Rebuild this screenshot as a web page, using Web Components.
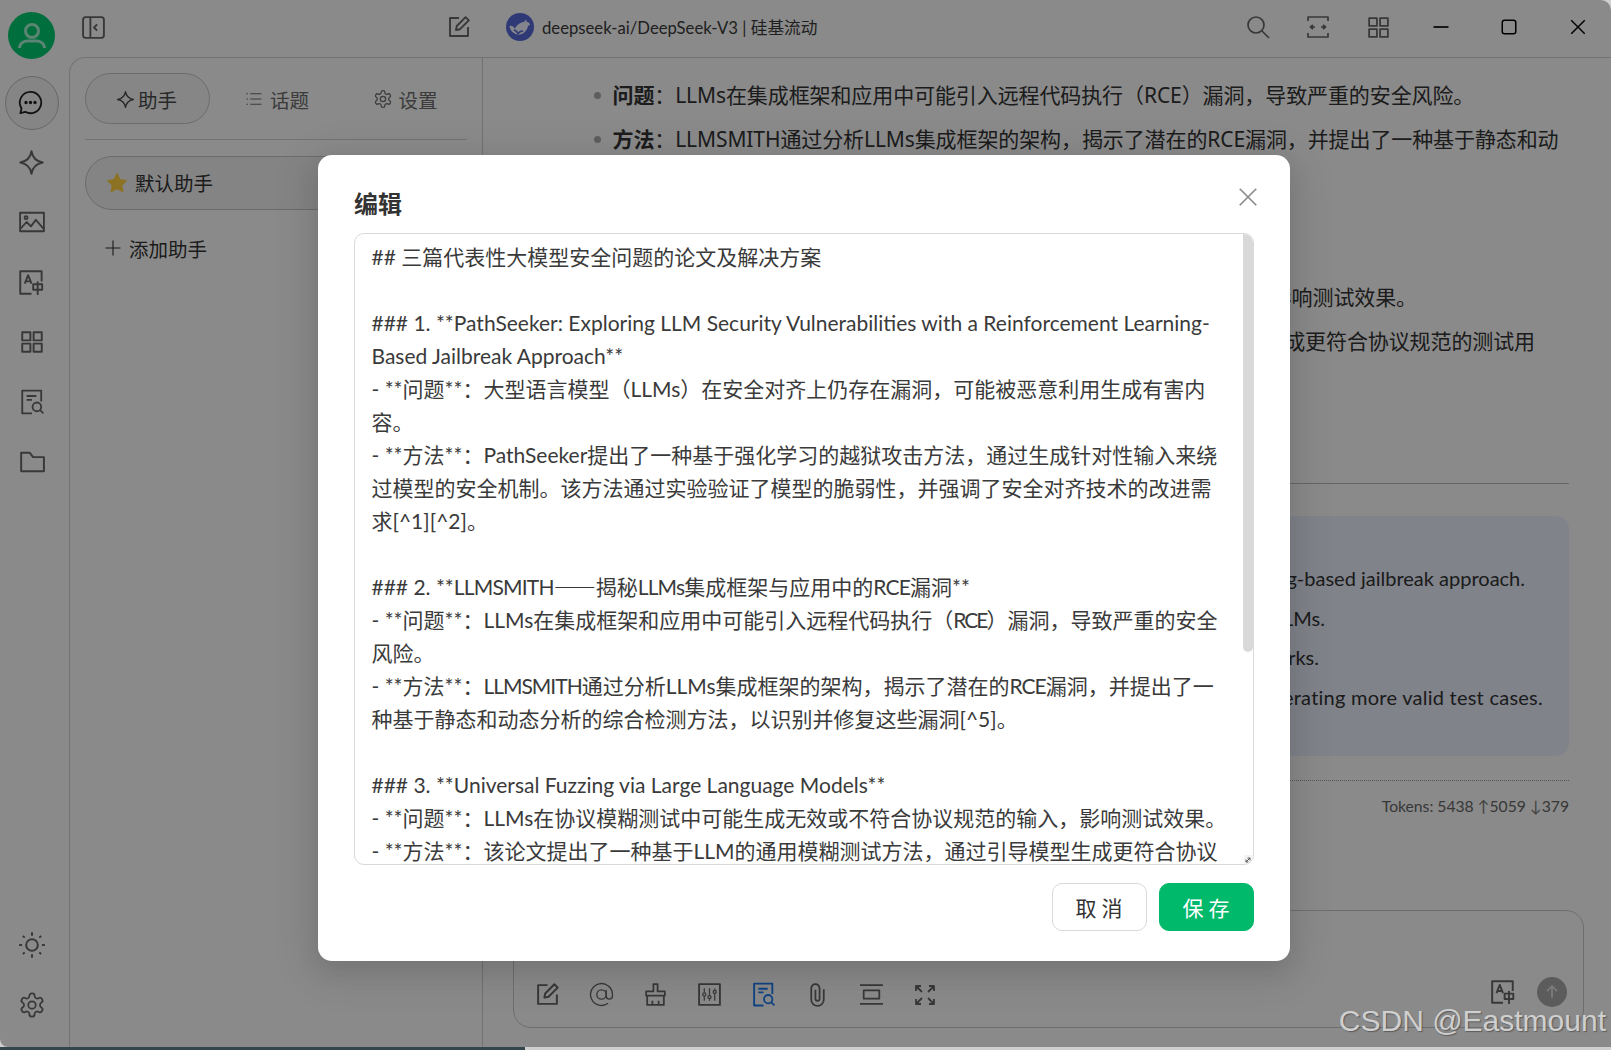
<!DOCTYPE html>
<html lang="zh"><head><meta charset="utf-8"><title>编辑</title>
<style>
html,body{margin:0;padding:0;width:1611px;height:1050px;overflow:hidden;background:#cfcfcf}
body{font-family:"Noto Sans","Noto Sans CJK SC",sans-serif;color:#333}
edit-field div{height:33px}
edit-field .n1{letter-spacing:-1px}
edit-field .n2{letter-spacing:-2px}
edit-field .n3{letter-spacing:-.8px}
edit-field .cjk{font-family:"Noto Sans CJK SC",sans-serif}
</style></head><body>
<app-shell>
  <side-rail></side-rail>
  <div slot="main" style="display:flex;flex-direction:column;min-width:0;flex:1">
    <title-bar></title-bar>
    <div style="display:flex;flex:1;min-height:0">
      <assistant-panel></assistant-panel>
      <chat-view></chat-view>
    </div>
  </div>
  <edit-modal slot="overlay" heading="编辑"><edit-field>
<div>## 三篇代表性大模型安全问题的论文及解决方案</div>
<div></div>
<div>### 1. **PathSeeker: Exploring LLM Security Vulnerabilities with a Reinforcement Learning-</div>
<div>Based Jailbreak Approach**</div>
<div>- **问题**：大型语言模型（LLMs）在安全对齐上仍存在漏洞，可能被恶意利用生成有害内</div>
<div>容。</div>
<div>- **方法**：PathSeeker提出了一种基于强化学习的越狱攻击方法，通过生成针对性输入来绕</div>
<div>过模型的安全机制。该方法通过实验验证了模型的脆弱性，并强调了安全对齐技术的改进需</div>
<div>求[^1][^2]。</div>
<div></div>
<div>### 2. **<span class="n3">LLMSMITH</span><span class="cjk">——</span>揭秘<span class="n3">LLMs</span>集成框架与应用中的<span class="n3">RCE</span>漏洞**</div>
<div>- **问题**：LLMs在集成框架和应用中可能引入远程代码执行（<span class="n2">RCE</span>）漏洞，导致严重的安全</div>
<div>风险。</div>
<div>- **方法**：<span class="n1">LLMSMITH</span>通过分析LLMs集成框架的架构，揭示了潜在的<span class="n1">RCE</span>漏洞，并提出了一</div>
<div>种基于静态和动态分析的综合检测方法，以识别并修复这些漏洞[^5]。</div>
<div></div>
<div>### 3. **Universal Fuzzing via Large Language Models**</div>
<div>- **问题**：LLMs在协议模糊测试中可能生成无效或不符合协议规范的输入，影响测试效果。</div>
<div>- **方法**：该论文提出了一种基于LLM的通用模糊测试方法，通过引导模型生成更符合协议</div>
</edit-field></edit-modal>
  <water-mark slot="overlay2">CSDN @Eastmount</water-mark>
</app-shell>
<task-strip></task-strip>
<script>
const ICONS={
toggle:'<rect x="2" y="2" width="20" height="20" rx="2.5"/><path d="M9 2v20M15.5 9l-3 3 3 3"/>',
edit:'<path d="M12 3H3v18h18v-9"/><path d="M9 15l.8-4L18.6 2.2l3.2 3.2L13 14.2z"/>',
chat:'<path d="M12 2.5a9.5 9.5 0 1 1-4.6 17.8L3 21.5l1-4.4A9.5 9.5 0 0 1 12 2.5z"/><circle cx="8" cy="12" r=".7" fill="currentColor"/><circle cx="12" cy="12" r=".7" fill="currentColor"/><circle cx="16" cy="12" r=".7" fill="currentColor"/>',
spark:'<path d="M12 2c1 6 4 9 10 10-6 1-9 4-10 10-1-6-4-9-10-10 6-1 9-4 10-10z"/>',
image:'<rect x="1" y="3.5" width="22" height="17"/><circle cx="6.500" cy="8" r="1.400"/><path d="M1 18.500l6-6.500 4 4 4.500-6 7.500 8.500"/>',
trans:'<path d="M21 11V2H2v20h10"/><path d="M6 13l3-7.5L12 13M7 11h4"/><rect x="13.500" y="13.500" width="8" height="5"/><path d="M17.500 11v12"/>',
grid:'<rect x="3" y="3" width="7.500" height="7.500"/><rect x="13.500" y="3" width="7.500" height="7.500"/><rect x="3" y="13.500" width="7.500" height="7.500"/><rect x="13.500" y="13.500" width="7.500" height="7.500"/>',
doc:'<path d="M12 22.500H3V1.500h17.500v10"/><path d="M7 6.500h9M7 10h5"/><circle cx="16.500" cy="16.500" r="4"/><path d="M19.500 19.500l3 3"/>',
folder:'<path d="M2 3.500h8l3 4h10v13H2z"/>',
sun:'<circle cx="12" cy="12" r="5"/><path d="M12 1v3M12 20v3M1 12h2.500M20.500 12H23M4.200 4.200l1.500 1.500M18.300 18.300l1.500 1.500M4.200 19.800l1.500-1.500M18.300 5.700l1.500-1.500"/>',
gear:'<path d="M12.220 2h-.44a2 2 0 0 0-2 2v.18a2 2 0 0 1-1 1.730l-.43.25a2 2 0 0 1-2 0l-.15-.08a2 2 0 0 0-2.730.73l-.22.38a2 2 0 0 0 .73 2.730l.15.1a2 2 0 0 1 1 1.720v.51a2 2 0 0 1-1 1.740l-.15.09a2 2 0 0 0-.73 2.730l.22.38a2 2 0 0 0 2.730.73l.15-.08a2 2 0 0 1 2 0l.43.25a2 2 0 0 1 1 1.730V20a2 2 0 0 0 2 2h.44a2 2 0 0 0 2-2v-.18a2 2 0 0 1 1-1.730l.43-.25a2 2 0 0 1 2 0l.15.08a2 2 0 0 0 2.730-.73l.22-.39a2 2 0 0 0-.73-2.730l-.15-.08a2 2 0 0 1-1-1.740v-.5a2 2 0 0 1 1-1.740l.15-.09a2 2 0 0 0 .73-2.730l-.22-.38a2 2 0 0 0-2.730-.73l-.15.08a2 2 0 0 1-2 0l-.43-.25a2 2 0 0 1-1-1.730V4a2 2 0 0 0-2-2z"/><circle cx="12" cy="12" r="3.200"/>',
list:'<path d="M7 5h15M7 12h15M7 19h15M2 5h2M2 12h2M2 19h2"/>',
plus:'<path d="M12 2v20M2 12h20"/>',
search:'<circle cx="10" cy="10" r="8"/><path d="M16 16l7 7"/>',
expand:'<path d="M2 6V2h20v4M2 18v4h20v-4"/><path d="M4 12h5M7 10l-2.500 2L7 14M20 12h-5M17 10l2.500 2-2.500 2"/>',
min:'<path d="M2 12h20"/>',
max:'<rect x="3" y="3" width="18" height="18" rx="3"/>',
close:'<path d="M3 3l18 18M21 3L3 21"/>',
at:'<circle cx="12" cy="12" r="4.500"/><path d="M16.500 7.500v6a3 3 0 0 0 6 0V12a10.500 10.500 0 1 0-4.200 8.400"/>',
brush:'<path d="M10 2h4v7h7v4H3V9h7z"/><path d="M4 13v9h16v-9M9 22v-4M15 22v-4"/>',
sliders:'<rect x="2" y="2" width="20" height="20"/><path d="M7 6v4M7 14v4M12 6v6.500M12 16.500V18M17 6v1.500M17 11.500V18" stroke-width="1.200"/><circle cx="7" cy="12" r="1.500" stroke-width="1.200"/><circle cx="12" cy="14.500" r="1.500" stroke-width="1.200"/><circle cx="17" cy="9.500" r="1.500" stroke-width="1.200"/>',
clip:'<path d="M10 7.500V16a2 2 0 0 0 4 0V6a4 4 0 0 0-8 0v11a6 6 0 0 0 12 0V7"/>',
fold:'<path d="M1 3h22M1 21h22"/><rect x="4.500" y="8" width="15" height="8"/>',
arrows:'<path d="M3 3l6 6M3 8V3h5M21 3l-6 6M21 8V3h-5M3 21l6-6M3 16v5h5M21 21l-6-6M21 16v5h-5"/>',
up:'<path d="M12 19V5M6 11l6-6 6 6"/>'
};
class UiIcon extends HTMLElement{
  connectedCallback(){
    const s=this.getAttribute('size')||24, w=this.getAttribute('stroke')||2;
    this.attachShadow({mode:'open'}).innerHTML=`<style>:host{display:inline-flex;flex:none;line-height:0;color:inherit}svg{display:block}</style><svg width="${s}" height="${s}" viewBox="0 0 24 24" fill="none" stroke="currentColor" stroke-width="${w}" stroke-linejoin="round">${ICONS[this.getAttribute('name')]}</svg>`;
  }
}
customElements.define('ui-icon',UiIcon);

class AppShell extends HTMLElement{constructor(){super();this.attachShadow({mode:'open'}).innerHTML=`<style>
:host{display:flex;position:relative;width:1611px;height:1047px;overflow:hidden;background:#fbfbfb;border-radius:0 10px 0 8px}
.dim{position:absolute;inset:0;background:rgba(0,0,0,.45)}
</style><slot></slot><slot name="main"></slot><div class="dim"></div><slot name="overlay"></slot><slot name="overlay2"></slot>`}}
customElements.define('app-shell',AppShell);

class SideRail extends HTMLElement{constructor(){super();this.attachShadow({mode:'open'}).innerHTML=`<style>
:host{display:flex;flex-direction:column;align-items:center;width:69px;flex:none;padding:12px 0 12px;box-sizing:border-box;color:#666}
.av{width:47px;height:47px;border-radius:50%;background:#00c870;margin:0 0 17px -6px;display:flex;align-items:center;justify-content:center;color:#a6f0cf}
.i{width:60px;height:60px;display:flex;align-items:center;justify-content:center;margin-left:-6px;position:relative}
.i.on::before{content:"";position:absolute;top:0;left:3px;width:52px;height:52px;border:1px solid #bdbdbd;border-radius:50%;background:#f2f2f2}
.i.on{height:56px;align-items:flex-start;color:#222}
.i.on ui-icon{position:relative;top:13px;left:-1px}
.sp{flex:1}
</style>
<div class="av"><svg width="30" height="30" viewBox="0 0 30 30" fill="none" stroke="currentColor" stroke-width="3"><circle cx="15" cy="10" r="6.500"/><path d="M2.500 27c0-5 5-7 7.500-7h10c2.500 0 7.500 2 7.500 7"/></svg></div>
<div class="i on"><ui-icon name="chat" size="27" stroke="1.600"></ui-icon></div>
<div class="i"><ui-icon name="spark" size="27" stroke="1.700"></ui-icon></div>
<div class="i"><ui-icon name="image" size="26" stroke="1.700"></ui-icon></div>
<div class="i"><ui-icon name="trans" size="27" stroke="1.700"></ui-icon></div>
<div class="i"><ui-icon name="grid" size="26" stroke="1.800"></ui-icon></div>
<div class="i"><ui-icon name="doc" size="26" stroke="1.700"></ui-icon></div>
<div class="i"><ui-icon name="folder" size="26" stroke="1.800"></ui-icon></div>
<div class="sp"></div>
<div class="i"><ui-icon name="sun" size="28" stroke="1.700"></ui-icon></div>
<div class="i"><ui-icon name="gear" size="28" stroke="1.500"></ui-icon></div>`}}
customElements.define('side-rail',SideRail);

class TitleBar extends HTMLElement{constructor(){super();this.attachShadow({mode:'open'}).innerHTML=`<style>
:host{display:flex;align-items:center;height:57px;flex:none;color:#666;position:relative}
.l{width:414px;box-sizing:border-box;display:flex;justify-content:space-between;padding:0 12px 0 12px;align-items:center;margin-top:-3px}
.t{display:flex;align-items:center;gap:8px;margin-left:23px;font:16.700px "Lato","Noto Sans CJK SC",sans-serif;color:#3a3a3a;white-space:nowrap;margin-top:-3px}
.r{margin-left:auto;display:flex;align-items:center;margin-right:24px;margin-top:-3px}
.logo{display:block}
.k{color:#000}
</style>
<div class="l"><ui-icon name="toggle" size="25" stroke="1.800"></ui-icon><ui-icon name="edit" size="24" stroke="1.900"></ui-icon></div>
<div class="t"><svg class="logo" width="28" height="28" viewBox="0 0 28 28"><circle cx="14" cy="14" r="14" fill="#5468d8"/><path d="M3.500 13c2-1 4 .5 5.500 2.500 2-4 6-6.500 9-6.500l2-2.500 1 2.500c2 0 3 1.500 3 3-2 0-2 2-3 4-2 4-6 6.500-10 5.500-4-1-7-4.500-7.500-8.500z" fill="#eef0ff"/><path d="M8 17c2 .5 3.500 2 4 4 1-2 3-3 5-3" fill="none" stroke="#5468d8" stroke-width="1.300"/></svg><span>deepseek-ai/DeepSeek-V3 | 硅基流动</span></div>
<div class="r"><ui-icon name="search" size="24" stroke="1.700" style="margin-right:2px"></ui-icon>
<ui-icon name="expand" size="24" stroke="1.700" style="margin-left:34px"></ui-icon>
<ui-icon name="grid" size="25" stroke="1.700" style="margin-left:36px"></ui-icon>
<ui-icon class="k" name="min" size="18" stroke="2.200" style="margin-left:41px"></ui-icon>
<ui-icon class="k" name="max" size="18" stroke="2" style="margin-left:50px"></ui-icon>
<ui-icon class="k" name="close" size="18" stroke="1.900" style="margin-left:51px"></ui-icon></div>`}}
customElements.define('title-bar',TitleBar);

class AssistantPanel extends HTMLElement{constructor(){super();this.attachShadow({mode:'open'}).innerHTML=`<style>
:host{display:block;width:414px;flex:none;box-sizing:border-box;border:1px solid #cfcfcf;border-width:1px 1px 0 1px;border-top-left-radius:16px;padding:15px 15px 0;font-size:19.500px}
.tabs{display:flex;height:51px;align-items:center;color:#6c6c6c;margin-bottom:15px}
.tab{display:flex;align-items:center;justify-content:center;gap:7px;height:51px;width:125px;box-sizing:border-box;border-radius:26px;flex:none;padding-top:1px}
.tab.a{border:1px solid #c4c4c4;background:#f5f5f5;color:#4a4a4a;gap:3px;padding-right:2px}
.tab.b{margin-left:2px;width:130px}.tab.c{width:125px;gap:5px;margin-left:1px}
hr{border:0;border-top:1px solid #cfcfcf;margin:0 0 16px}
.item{height:54px;box-sizing:border-box;border:1px solid #c4c4c4;border-radius:27px;background:#f0f0f0;display:flex;align-items:center;padding-left:21px;gap:8px;color:#333}
.item span{position:relative;top:-1px}
.add{display:flex;align-items:center;height:48px;margin-top:14px;padding-left:19px;gap:7px;color:#333}
</style>
<div class="tabs"><div class="tab a"><ui-icon name="spark" size="19" stroke="1.700"></ui-icon>助手</div>
<div class="tab b"><ui-icon name="list" size="18" stroke="1.500"></ui-icon>话题</div>
<div class="tab c"><ui-icon name="gear" size="20" stroke="1.500"></ui-icon>设置</div></div>
<hr>
<div class="item"><svg width="20" height="20" viewBox="0 0 20 20"><path d="M10 1l2.800 5.800 6.200.9-4.500 4.400 1.100 6.300L10 15.400 4.400 18.400l1.100-6.300L1 7.700l6.200-.9z" fill="#ffcf3f" stroke="#ffcf3f" stroke-width="1.500" stroke-linejoin="round"/></svg><span>默认助手</span></div>
<div class="add"><ui-icon name="plus" size="18" stroke="1.500"></ui-icon><span>添加助手</span></div>`}}
customElements.define('assistant-panel',AssistantPanel);

class ChatView extends HTMLElement{constructor(){super();this.attachShadow({mode:'open'}).innerHTML=`<style>
:host{display:flex;flex-direction:column;flex:1;min-width:0;border-top:1px solid #cfcfcf;font-size:21px;color:#333;position:relative}
.msg{padding:15px 42px 0 0;display:flex;flex-direction:column;align-items:flex-end;}
.row{height:44px;line-height:44px;white-space:nowrap;letter-spacing:-.1px}
.bul{align-self:flex-start;margin-left:110.500px;display:flex;gap:10px;align-items:center}
.bul::before{content:"";width:7px;height:7px;border-radius:50%;background:#aaa;margin-right:2px}
b{font-weight:700}
.gap{height:114px}
hr{border:0;border-top:1px solid #bbb;margin:120px 42px 0 0}
.box{margin:32px 42px 0 0;height:240px;box-sizing:border-box;background:#e9eefb;border-radius:14px;padding:43px 0 0;display:flex;flex-direction:column;align-items:flex-end;font:20px "Lato","Noto Sans",sans-serif}
.box div{height:39.500px;line-height:39.500px;white-space:nowrap}
.dots{border-top:1px dotted #999;margin:24px 42px 0 0}
.tok{margin:12px 42px 0 0;text-align:right;font:15.700px/26px "Lato","Noto Sans",sans-serif;color:#666}
.tok span{letter-spacing:-7.500px;margin-right:7.500px;color:#777}
.input{margin:auto 27px 19px 30px;height:118px;box-sizing:border-box;border:1px solid #c9c9c9;border-radius:18px;display:flex;align-items:flex-end;padding:0 16px 20px 21px;color:#666}
.tools{display:flex;gap:29px;align-items:center}
.tools .blue{color:#1f7af0}
.right{margin-left:auto;display:flex;align-items:center;gap:21px}
.send{width:30px;height:30px;border-radius:50%;background:#a8a8a8;color:#e0e0e0;display:flex;align-items:center;justify-content:center}
</style>
<div class="msg">
<div class="row bul"><span><b>问题</b>：LLMs在集成框架和应用中可能引入远程代码执行（RCE）漏洞，导致严重的安全风险。</span></div>
<div class="row bul"><span><b>方法</b>：LLMSMITH通过分析LLMs集成框架的架构，揭示了潜在的RCE漏洞，并提出了一种基于静态和动</span></div>
<div class="gap"></div>
<div class="row" style="margin-right:152px">影响测试效果。</div>
<div class="row" style="margin-right:34px">成更符合协议规范的测试用</div>
</div>
<hr>
<div class="box">
<div style="margin-right:44px">g-based jailbreak approach.</div>
<div style="margin-right:244px">LMs.</div>
<div style="margin-right:250px">rks.</div>
<div style="margin-right:26px;letter-spacing:.25px">nerating more valid test cases.</div>
</div>
<div class="dots"></div>
<div class="tok">Tokens: 5438 <span>↑</span>5059 <span>↓</span>379</div>
<div class="input"><div class="tools">
<ui-icon name="edit" size="25" stroke="1.900"></ui-icon><ui-icon name="at" size="25" stroke="1.300"></ui-icon><ui-icon name="brush" size="25" stroke="1.700"></ui-icon><ui-icon name="sliders" size="25" stroke="1.800"></ui-icon><ui-icon class="blue" name="doc" size="25" stroke="1.800"></ui-icon><ui-icon name="clip" size="25" stroke="1.700"></ui-icon><ui-icon name="fold" size="25" stroke="1.700"></ui-icon><ui-icon name="arrows" size="24" stroke="1.800"></ui-icon>
</div><div class="right"><ui-icon name="trans" size="26" stroke="1.800"></ui-icon><div class="send"><ui-icon name="up" size="20" stroke="2.200"></ui-icon></div></div></div>`}}
customElements.define('chat-view',ChatView);

class EditField extends HTMLElement{constructor(){super();this.attachShadow({mode:'open'}).innerHTML=`<style>
:host{display:block;position:relative;height:632px;box-sizing:border-box;border:1px solid #d9d9d9;border-radius:10px;padding:6px 16.500px 0;overflow:hidden;background:#fff;font-family:"Lato","Noto Sans CJK SC",sans-serif;font-size:21px;line-height:33px;color:#3a3a3a;white-space:nowrap}
.thumb{position:absolute;right:0;top:0;width:10px;height:418px;background:#d9d9d9;border-radius:0 0 6px 6px}
.grip{position:absolute;right:0;bottom:0;display:block;background:#f3f3f3}
</style><slot></slot><div class="thumb"></div><svg class="grip" width="9" height="9" viewBox="0 0 9 9"><path d="M2 7l4-4M2 4.500V7h2.500M3.500 3H6v2.500" fill="none" stroke="#555" stroke-width="1"/></svg>`}}
customElements.define('edit-field',EditField);

class EditModal extends HTMLElement{constructor(){super();const h=this.getAttribute('heading')||'';this.attachShadow({mode:'open'}).innerHTML=`<style>
:host{position:absolute;left:318px;top:155px;width:972px;height:806px;box-sizing:border-box;background:#fff;border-radius:14px;padding:31px 36.500px 0 36px;display:flex;flex-direction:column;box-shadow:0 9px 42px 12px rgba(0,0,0,.07),0 9px 24px rgba(0,0,0,.1);color:#333}
.head{display:flex;justify-content:space-between;align-items:center;height:36px;margin-bottom:11px;font-size:24px;font-weight:700;line-height:36px}
.x{color:#8c8c8c;margin-right:-5px;margin-top:-15px}
.foot{display:flex;justify-content:flex-end;gap:12px;margin-top:18px}
.btn{width:95px;height:48px;box-sizing:border-box;border-radius:10px;border:1px solid #d9d9d9;display:flex;align-items:center;justify-content:center;font-size:21px;letter-spacing:5px;text-indent:5px;background:#fff;color:#333}
.btn.p{background:#00b96b;border-color:#00b96b;color:#fff}
</style><div class="head"><span>${h}</span><ui-icon class="x" name="close" size="22" stroke="1.900"></ui-icon></div><slot></slot>
<div class="foot"><div class="btn">取消</div><div class="btn p">保存</div></div>`}}
customElements.define('edit-modal',EditModal);

class WaterMark extends HTMLElement{constructor(){super();this.attachShadow({mode:'open'}).innerHTML=`<style>
:host{position:absolute;right:5px;bottom:7px;font:30px/38px "Liberation Sans",sans-serif;color:#cfcfcf;text-shadow:1px 1px 1px rgba(60,60,60,.6);white-space:nowrap}
</style><slot></slot>`}}
customElements.define('water-mark',WaterMark);

class TaskStrip extends HTMLElement{constructor(){super();this.attachShadow({mode:'open'}).innerHTML=`<style>
:host{display:flex;height:3px;width:1611px}
.d{width:525px;background:#35454c}
.g{flex:1;background:#cfcfcf}
</style><div class="d"></div><div class="g"></div>`}}
customElements.define('task-strip',TaskStrip);
</script>
</body></html>
